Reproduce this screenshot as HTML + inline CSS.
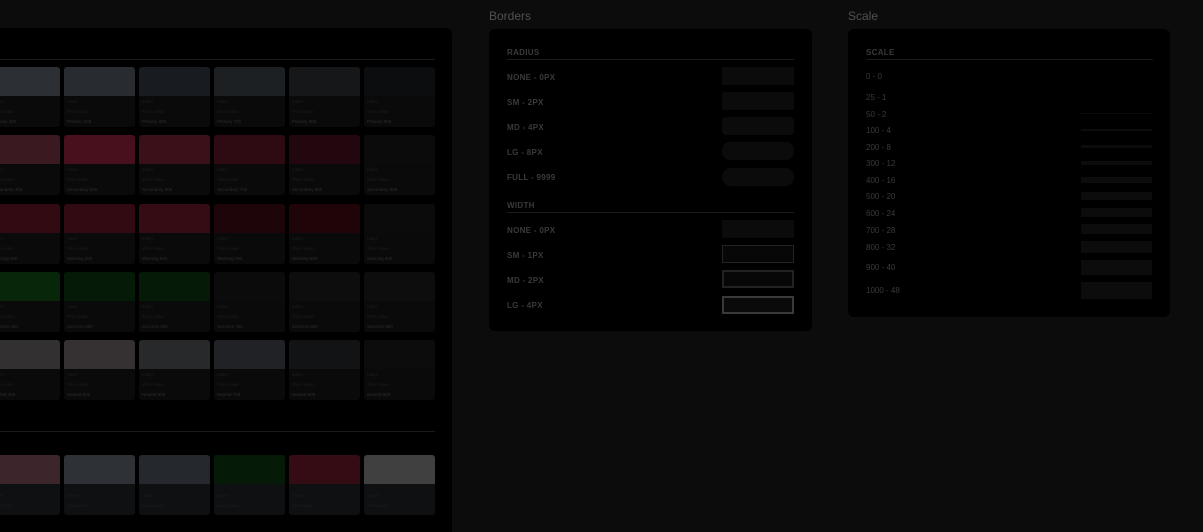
<!DOCTYPE html>
<html><head><meta charset="utf-8"><style>
*{margin:0;padding:0;box-sizing:border-box}
html,body{width:1203px;height:532px;overflow:hidden}
body{background:#0c0c0c;font-family:"Liberation Sans",sans-serif;position:relative}
.panel{position:absolute;background:#000;border-radius:6px}
.card{position:absolute;width:71px;height:60px;background:#0a0a0b;border-radius:3px;overflow:hidden}
.card .sw{height:29px}
.card .t{position:absolute;left:3px;font-size:4.5px;color:#1e1e1e;white-space:nowrap}
.card .n{color:#2e2e2e}
.h{position:absolute;font-size:12px;color:#505050}
.lab{position:absolute;font-size:8px;font-weight:bold;color:#3a3a3a;letter-spacing:.3px}
.line{position:absolute;height:1px;background:#1a1a1a}
.box{position:absolute;width:72px;height:18px;background:#0b0b0b}
.sl{position:absolute;font-size:8px;color:#3a3a3a}
.bar{position:absolute;left:1081px;width:71px;background:#0c0c0c}
</style></head><body>
<div class="panel" style="left:-10px;top:28px;width:462px;height:510px"></div>
<div class="line" style="left:0;top:59px;width:435px"></div>
<div class="line" style="left:0;top:431px;width:435px"></div>
<div id="cards"></div>

<div class="h" style="left:489px;top:9px">Borders</div>
<div class="panel" style="left:489px;top:29px;width:323px;height:302px"></div>
<div class="lab" style="left:507px;top:48px">RADIUS</div>
<div class="line" style="left:507px;top:59px;width:287px"></div>
<div class="lab" style="left:507px;top:73px">NONE - 0PX</div><div class="box" style="left:722px;top:67px"></div>
<div class="lab" style="left:507px;top:98px">SM - 2PX</div><div class="box" style="left:722px;top:92px;border-radius:2px"></div>
<div class="lab" style="left:507px;top:123px">MD - 4PX</div><div class="box" style="left:722px;top:117px;border-radius:4px"></div>
<div class="lab" style="left:507px;top:148px">LG - 8PX</div><div class="box" style="left:722px;top:142px;border-radius:8px"></div>
<div class="lab" style="left:507px;top:173px">FULL - 9999</div><div class="box" style="left:722px;top:168px;border-radius:9px"></div>
<div class="lab" style="left:507px;top:201px">WIDTH</div>
<div class="line" style="left:507px;top:212px;width:287px"></div>
<div class="lab" style="left:507px;top:226px">NONE - 0PX</div><div class="box" style="left:722px;top:220px"></div>
<div class="lab" style="left:507px;top:251px">SM - 1PX</div><div class="box" style="left:722px;top:245px;border:1px solid #222;background:#070707"></div>
<div class="lab" style="left:507px;top:276px">MD - 2PX</div><div class="box" style="left:722px;top:270px;border:2px solid #222;background:#070707"></div>
<div class="lab" style="left:507px;top:301px">LG - 4PX</div><div class="box" style="left:722px;top:296px;border:2px solid #3a3a3a;background:#0a0a0a"></div>

<div class="h" style="left:848px;top:9px">Scale</div>
<div class="panel" style="left:848px;top:29px;width:322px;height:288px"></div>
<div class="lab" style="left:866px;top:48px">SCALE</div>
<div class="line" style="left:866px;top:59px;width:287px"></div>
<div class="sl" style="left:866px;top:72px">0 - 0</div>
<div class="sl" style="left:866px;top:93px">25 - 1</div>
<div class="sl" style="left:866px;top:110px">50 - 2</div><div class="bar" style="top:113px;height:1px"></div>
<div class="sl" style="left:866px;top:126px">100 - 4</div><div class="bar" style="top:129px;height:2px"></div>
<div class="sl" style="left:866px;top:143px">200 - 8</div><div class="bar" style="top:145px;height:3px"></div>
<div class="sl" style="left:866px;top:159px">300 - 12</div><div class="bar" style="top:161px;height:4px"></div>
<div class="sl" style="left:866px;top:176px">400 - 16</div><div class="bar" style="top:177px;height:6px"></div>
<div class="sl" style="left:866px;top:192px">500 - 20</div><div class="bar" style="top:192px;height:8px"></div>
<div class="sl" style="left:866px;top:209px">600 - 24</div><div class="bar" style="top:208px;height:9px"></div>
<div class="sl" style="left:866px;top:226px">700 - 28</div><div class="bar" style="top:224px;height:10px"></div>
<div class="sl" style="left:866px;top:243px">800 - 32</div><div class="bar" style="top:241px;height:12px"></div>
<div class="sl" style="left:866px;top:263px">900 - 40</div><div class="bar" style="top:260px;height:15px"></div>
<div class="sl" style="left:866px;top:286px">1000 - 48</div><div class="bar" style="top:282px;height:17px"></div>

<script>
var xs=[-11,64,139,214,289,364];
var rows=[
[67,"Primary",["#2c3034","#282c30","#181b1f","#1d2023","#151719","#0c0d0e"]],
[135,"Secondary",["#3a1a20","#48101c","#3c1018","#2e0a12","#22080e","#0b0b0b"]],
[204,"Warning",["#320a12","#320a12","#350b14","#1e050a","#200508","#0b0b0b"]],
[272,"Success",["#08260a","#051a07","#051a07","#0b0b0b","#0d0d0e","#0d0d0d"]],
[340,"Neutral",["#333031","#353132","#28292b","#202225","#121315","#0c0c0d"]]];
var lv=[400,500,600,700,800,900],h="";
rows.forEach(function(r){xs.forEach(function(x,i){
h+='<div class="card" style="left:'+x+'px;top:'+r[0]+'px"><div class="sw" style="background:'+r[2][i]+'"></div><div class="t" style="top:32px">token</div><div class="t" style="top:42px">#hex value</div><div class="t n" style="top:52px">'+r[1]+' '+lv[i]+'</div></div>';});});
var bc=["#3c262b","#2e3236","#25292d","#051a07","#350b14","#404040"];
xs.forEach(function(x,i){h+='<div class="card" style="left:'+x+'px;top:455px;background:#0f1012"><div class="sw" style="background:'+bc[i]+'"></div><div class="t" style="top:38px">name</div><div class="t" style="top:48px">description</div></div>';});
document.getElementById("cards").innerHTML=h;
</script>
</body></html>
